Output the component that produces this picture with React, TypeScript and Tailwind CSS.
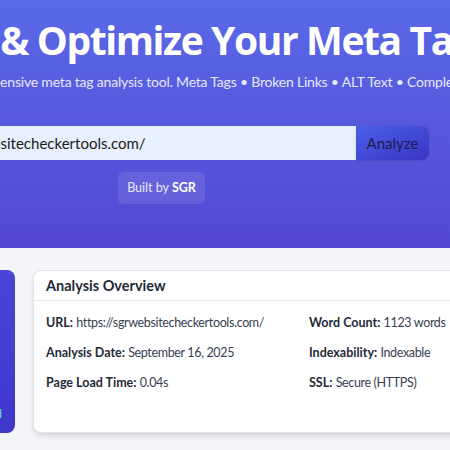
const overviewLeft = [
  { label: "URL:", value: "https://sgrwebsitecheckertools.com/" },
  { label: "Analysis Date:", value: "September 16, 2025" },
  { label: "Page Load Time:", value: "0.04s" },
];

const overviewRight = [
  { label: "Word Count:", value: "1123 words" },
  { label: "Indexability:", value: "Indexable" },
  { label: "SSL:", value: "Secure (HTTPS)" },
];

function Hero() {
  return (
    <section className="h-[248px] bg-gradient-to-b from-[#5969e7] to-[#5447d3] text-white overflow-hidden">
      <h1
        className="pt-[16px] ml-[-151px] whitespace-nowrap text-[39px] leading-[48px] font-bold tracking-[-1.4px]"
        style={{ fontFamily: '"Open Sans", "Noto Sans", sans-serif' }}
      >
        Analyze &amp; Optimize Your Meta Tags
      </h1>
      <p className="mt-[7px] ml-[-55px] whitespace-nowrap text-[14px] leading-[22px] tracking-[-0.2px] text-white/85">
        Comprehensive meta tag analysis tool. Meta Tags • Broken Links • ALT Text • Complete SEO Report
      </p>
      <div className="mt-[33px] ml-[-110px] flex items-stretch h-[34px]">
        <input
          readOnly
          defaultValue="https://sgrwebsitecheckertools.com/"
          className="w-[466px] bg-[#e8f0fe] px-4 text-[15px] text-[#1a1a1a] outline-none"
        />
        <button className="w-[73px] rounded-r-lg bg-gradient-to-br from-[#4b5fe9] to-[#3a33c6] text-[15px] text-[#1e1b4b] shadow">
          Analyze
        </button>
      </div>
      <div className="mt-[12px] ml-[118px] w-[87px] h-[32px] flex items-center justify-center rounded-md bg-white/10 text-[12.5px] text-white/85">
        Built by&nbsp;<span className="font-bold text-white">SGR</span>
      </div>
    </section>
  );
}

function Row({ label, value }: { label: string; value: string }) {
  return (
    <div className="text-[12.5px] leading-[18px] text-[#374151] whitespace-nowrap">
      <span className="font-bold text-[#1f2937]">{label}</span>{" "}
      <span className="tracking-[-0.35px]">{value}</span>
    </div>
  );
}

export default function App() {
  return (
    <div
      className="w-[450px] h-[450px] overflow-hidden bg-[#f4f5f8]"
      style={{ fontFamily: 'Lato, "Open Sans", sans-serif' }}
    >
      <Hero />
      <div className="mt-[22px] flex gap-[18px] ml-[-185px]">
        <aside className="w-[200px] h-[163px] shrink-0 rounded-lg bg-gradient-to-b from-[#4a45d6] to-[#3f36cc] flex flex-col justify-end items-end pr-[13px] pb-[12px]">
          <span className="text-[12px] leading-[14px] text-[#5eead4]">SEO Score: Good</span>
        </aside>
        <div className="w-[600px] h-[163px] shrink-0 rounded-lg border border-[#e2e4e8] bg-white shadow-md">
          <div className="h-[30px] px-3 flex items-center border-b border-[#e5e7eb]">
            <h2 className="text-[14.5px] font-bold text-[#1f2937]">Analysis Overview</h2>
          </div>
          <div className="grid grid-cols-[263px_1fr] px-3 pt-[13px]">
            <div className="flex flex-col gap-[12px]">
              {overviewLeft.map((r) => (
                <Row key={r.label} {...r} />
              ))}
            </div>
            <div className="flex flex-col gap-[12px]">
              {overviewRight.map((r) => (
                <Row key={r.label} {...r} />
              ))}
            </div>
          </div>
        </div>
      </div>
    </div>
  );
}
